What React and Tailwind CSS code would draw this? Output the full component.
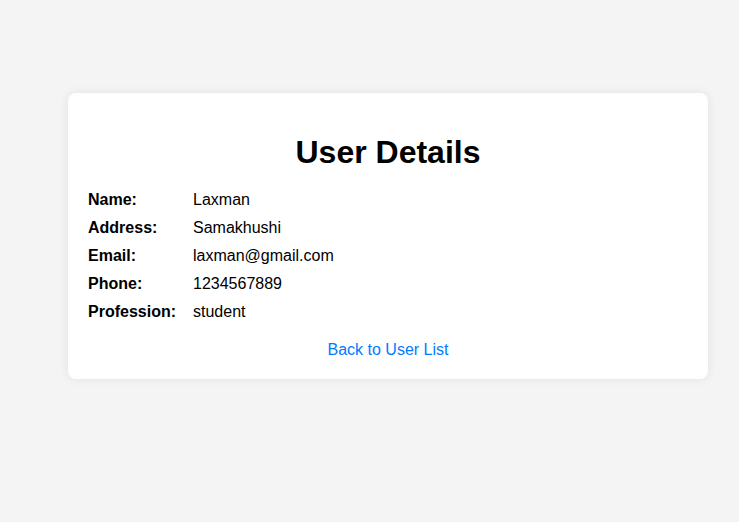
import React from 'react';

const user = {
    name: 'Laxman',
    address: 'Samakhushi',
    email: 'laxman@gmail.com',
    phone: '1234567889',
    profession: 'student',
};

export default function App() {
    const rows = [
        ['Name:', user.name],
        ['Address:', user.address],
        ['Email:', user.email],
        ['Phone:', user.phone],
        ['Profession:', user.profession],
    ];

    return (
        <div className="min-h-screen w-full bg-[#f4f4f4] pt-[93px] font-['Liberation_Sans',Arial,sans-serif] text-black">
            {/* card */}
            <div className="ml-[68px] w-[640px] rounded-lg bg-white px-5 pt-5 pb-5 shadow-[0_0_10px_rgba(0,0,0,0.08)]">
                <h1 className="mt-[21px] mb-[15px] text-center text-[32px] font-bold leading-[37px]">User Details</h1>

                <div className="flex flex-col">
                    {rows.map(([label, value]) => (
                        <div key={label} className="flex py-[5px] text-base leading-[18px]">
                            <span className="w-[105px] font-bold">{label}</span>
                            <span>{value}</span>
                        </div>
                    ))}
                </div>

                <div className="mt-[15px] text-center text-base leading-[18px]">
                    <a href="#" className="text-[#007bff]">Back to User List</a>
                </div>
            </div>
        </div>
    );
}
